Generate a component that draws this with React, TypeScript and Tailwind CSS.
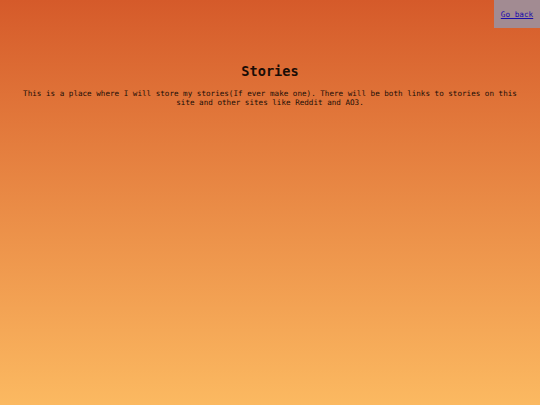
import React from 'react';

export default function App() {
  return (
    <div className="relative min-h-[405px] w-full bg-gradient-to-b from-[#d55a2a] to-[#fbb961] font-['DejaVu_Sans_Mono',monospace] text-[#1a0d06]">
      <div className="absolute right-0 top-0 flex h-[28px] w-[46px] items-center justify-center bg-[#a28b92]">
        <a href="#" className="mt-[1px] text-[7.7px] text-[#1a0dab] underline">Go back</a>
      </div>
      <div className="flex flex-col items-center px-5 pt-[62px]">
        <h1 className="text-[13.6px] font-bold leading-[18px]">Stories</h1>
        <p className="mt-[9px] max-w-[500px] text-center text-[7.6px] leading-[9px]">
          This is a place where I will store my stories(If ever make one). There will be both links to stories on this site and other sites like Reddit and AO3.
        </p>
      </div>
    </div>
  );
}
